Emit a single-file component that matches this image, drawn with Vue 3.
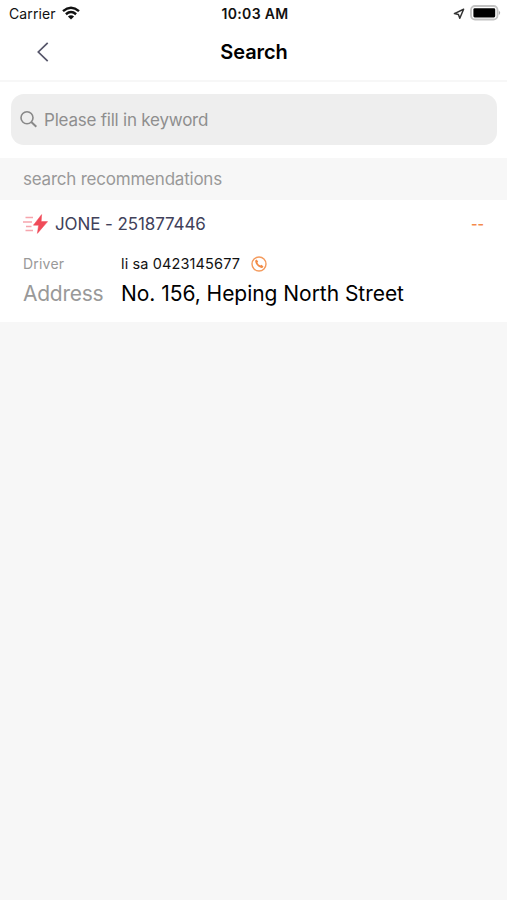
<script setup>
const order = {
  title: 'JONE - 251877446',
  status: '--',
  driver: 'li sa 0423145677',
  address: 'No. 156, Heping North Street',
}
</script>

<template>
  <main class="screen">
    <div class="status-bar">
      <div class="carrier">
        <span class="carrier-name">Carrier</span>
        <svg class="wifi" viewBox="0 0 18 14" fill="none" stroke="#111" stroke-width="2.5">
          <path d="M1 5.1Q9-1.5 17 5.1M3.9 8.2Q9 3.9 14.1 8.2" />
          <path d="M9 13.4 5.9 10.4Q9 8 12.1 10.4Z" fill="#111" stroke="none" />
        </svg>
      </div>
      <span class="clock">10:03 AM</span>
      <div class="indicators">
        <svg class="location" viewBox="0 0 12 12" fill="none" stroke="#333" stroke-width="1.5" stroke-linejoin="round">
          <path d="M10.6 1.2 1.4 5.6 5.4 6.4 6.8 10.2Z" />
        </svg>
        <svg class="battery" viewBox="0 0 31 16">
          <rect x="1" y="1" width="26.5" height="13.5" rx="4" fill="#fff" stroke="#c2c2c2" stroke-width="1.8" />
          <rect x="3.4" y="3.2" width="21.8" height="9.2" rx="1.3" fill="#000" />
          <path d="M28.8 5.5Q31.6 7.8 28.8 10.1Z" fill="#aaa" />
        </svg>
      </div>
    </div>

    <header class="nav">
      <svg class="back" viewBox="0 0 12 20" fill="none" stroke="#56566a" stroke-width="1.7">
        <path d="M10.7 .8 1.3 10 10.7 19.2" />
      </svg>
      <h1 class="title">Search</h1>
    </header>

    <section class="search-panel">
      <div class="search-box">
        <svg class="magnifier" viewBox="0 0 18 18" fill="none" stroke="#888" stroke-width="1.6">
          <circle cx="7" cy="6.8" r="6" />
          <path d="m11.3 11.1 5 4.6" stroke-width="2" />
        </svg>
        <span class="placeholder">Please fill in keyword</span>
      </div>
    </section>

    <h2 class="section-title">search recommendations</h2>

    <article class="order">
      <div class="order-head">
        <svg class="express" viewBox="0 0 25 20">
          <path d="M2.5 3.5H10M0 8H9M3 12.5H8.5M2.5 16.5H10" fill="none" stroke="#f6a5ad" stroke-width="1.3" />
          <path d="M18.6.6 10.4 11.2h5.2L14.4 19.4 24.6 7.6h-6.4Z" fill="#f04b59" stroke="#f04b59" stroke-width=".5" stroke-linejoin="round" />
        </svg>
        <span class="order-title">{{ order.title }}</span>
        <span class="order-status">{{ order.status }}</span>
      </div>
      <div class="row driver-row">
        <span class="label">Driver</span>
        <span class="driver">{{ order.driver }}</span>
        <svg class="phone" viewBox="0 0 16 16">
          <circle cx="8" cy="8" r="7" fill="none" stroke="#f49a5c" stroke-width="1.4" />
          <path d="M4.2 4.6 5.6 3.5 7.2 5.6 6.4 6.7Q7.4 8.7 9.3 9.6L10.4 8.8 12.5 10.4 11.3 11.9Q10 12.4 7.3 10.6 3.9 7.7 4.2 4.6Z" fill="#f28b46" />
        </svg>
      </div>
      <div class="row address-row">
        <span class="label">Address</span>
        <span class="address">{{ order.address }}</span>
      </div>
    </article>
  </main>
</template>

<style>
body {
  background: #f7f7f7;
}
</style>

<style scoped>
.screen {
  min-height: 900px;
  background: #f7f7f7;
  font-family: Inter, "Liberation Sans", sans-serif;
  color: #111;
  white-space: nowrap;
}
.status-bar {
  display: grid;
  grid-template-columns: 1fr auto 1fr;
  align-items: center;
  box-sizing: border-box;
  height: 28px;
  padding: 0 6px 2px 9px;
  background: #fff;
}
.carrier {
  display: flex;
  align-items: center;
  gap: 6px;
  font-size: 14px;
}
.carrier-name {
  letter-spacing: 0.1px;
}
.wifi {
  width: 18px;
  height: 14px;
}
.clock {
  font-size: 14px;
  font-weight: 600;
  letter-spacing: 0.35px;
}
.indicators {
  display: flex;
  justify-content: flex-end;
  align-items: center;
  gap: 5px;
}
.location {
  width: 12px;
  height: 12px;
  margin-top: 2px;
}
.battery {
  width: 31px;
  height: 16px;
}
.nav {
  display: grid;
  grid-template-columns: 1fr auto 1fr;
  align-items: center;
  box-sizing: border-box;
  height: 54px;
  padding-bottom: 4px;
  background: #fff;
  border-bottom: 2px solid #f7f7f7;
}
.back {
  width: 12px;
  height: 20px;
  margin-left: 37px;
}
.title {
  margin: 0;
  padding-left: 1px;
  font-size: 20px;
  font-weight: 600;
  letter-spacing: -0.1px;
  color: #000;
}
.search-panel {
  padding: 12px 10px 13px 11px;
  background: #fff;
}
.search-box {
  display: flex;
  align-items: center;
  gap: 6px;
  height: 51px;
  padding-left: 9px;
  border-radius: 13px;
  background: #eee;
}
.magnifier {
  width: 18px;
  height: 18px;
}
.placeholder {
  font-size: 17px;
  letter-spacing: -0.22px;
  color: #8e8e8e;
}
.section-title {
  display: flex;
  align-items: center;
  box-sizing: border-box;
  height: 42px;
  margin: 0;
  padding: 0 0 1px 23px;
  font-size: 17px;
  font-weight: 400;
  letter-spacing: -0.22px;
  color: #999;
}
.order {
  box-sizing: border-box;
  height: 122px;
  padding: 0 23px;
  background: #fff;
}
.order-head {
  display: flex;
  align-items: center;
  height: 48px;
}
.express {
  width: 25px;
  height: 20px;
  margin-right: 7px;
}
.order-title {
  font-size: 17px;
  letter-spacing: -0.1px;
  color: #41415a;
}
.order-status {
  margin-left: auto;
  font-size: 14px;
  font-weight: 600;
  line-height: 17px;
  padding-bottom: 2px;
  color: #f48a4a;
}
.row {
  display: flex;
  align-items: center;
}
.label {
  width: 98px;
  color: #999;
}
.driver-row {
  height: 31px;
  font-size: 14px;
}
.driver-row .label {
  letter-spacing: 0.2px;
}
.driver {
  font-size: 14.5px;
  letter-spacing: 0.13px;
}
.phone {
  width: 16px;
  height: 16px;
  margin-left: 10.5px;
}
.address-row {
  height: 28px;
  font-size: 21px;
}
.address-row .label {
  letter-spacing: -0.25px;
}
.address {
  letter-spacing: -0.04px;
  color: #000;
}
</style>
